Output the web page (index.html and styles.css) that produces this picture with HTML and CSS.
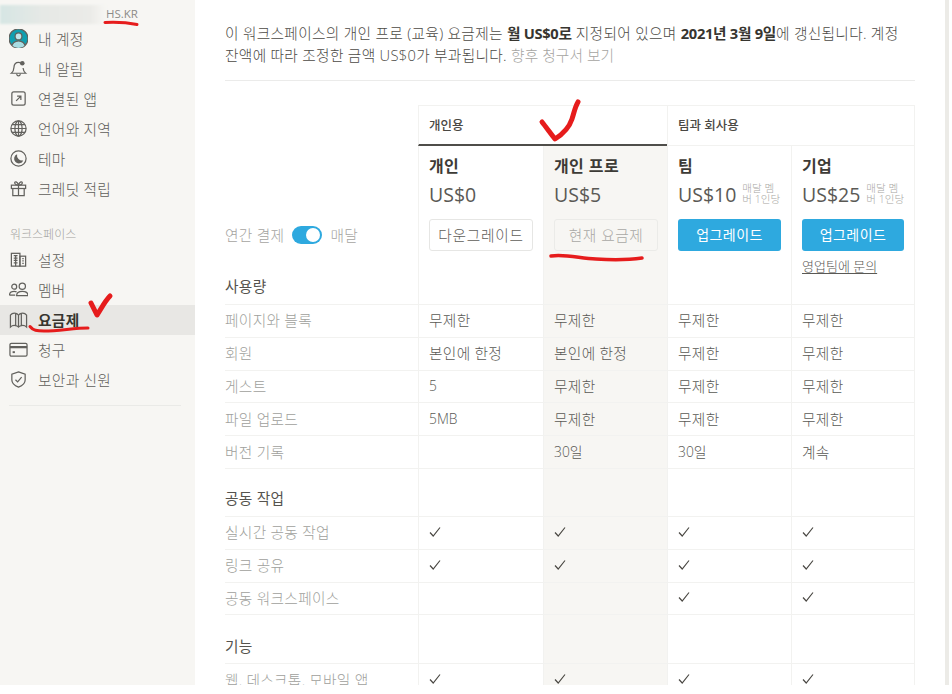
FILE: index.html
```html
<!DOCTYPE html>
<html lang="ko">
<head>
<meta charset="utf-8">
<title>요금제</title>
<link rel="stylesheet" href="styles.css">
</head>
<body>
<div class="shot">
  <aside class="sidebar">
    <div class="account"><span class="blur"></span><span class="domain">HS.KR</span></div>
    <nav class="nav">
      <a class="item"><svg class="ic" viewBox="0 0 20 20"><defs><clipPath id="av"><circle cx="10" cy="10" r="10"/></clipPath></defs><circle cx="10" cy="10" r="10" fill="#0f9fb0"/><g clip-path="url(#av)"><circle cx="10" cy="7.8" r="3.6" fill="#bfe6ea"/><ellipse cx="10" cy="18.5" rx="7" ry="6" fill="#a8dde3"/></g></svg><span>내 계정</span></a>
      <a class="item"><svg class="ic" viewBox="0 0 20 20"><path d="M12.500 4.200C11.800 3.700 11 3.500 10 3.500 7 3.500 5.300 6 5.200 9c-.1 2.800-1 4.600-2.700 6h15c-1.700-1.400-2.500-3.200-2.700-5.500"/><path d="M8 15.500c.2 1.500 1 2.300 2 2.300s1.800-.8 2-2.300"/><circle cx="14" cy="4.500" r="2.400" class="fill"/></svg><span>내 알림</span></a>
      <a class="item"><svg class="ic" viewBox="0 0 20 20"><rect x="3" y="3" width="14" height="14" rx="2"/><path d="M7.500 12.500l5-5M8.500 7.500h4v4"/></svg><span>연결된 앱</span></a>
      <a class="item"><svg class="ic" viewBox="0 0 20 20"><circle cx="10" cy="10" r="8"/><ellipse cx="10" cy="10" rx="3.800" ry="8"/><path d="M10 2v16M2 10h16M3.200 6h13.600M3.200 14h13.600"/></svg><span>언어와 지역</span></a>
      <a class="item"><svg class="ic" viewBox="0 0 20 20"><circle cx="10" cy="10" r="8"/><path class="fill" d="M8.500 5.500a5 5 0 1 0 6.500 6.500 5.500 5.500 0 0 1-6.500-6.500z"/></svg><span>테마</span></a>
      <a class="item"><svg class="ic" viewBox="0 0 20 20"><rect x="2.500" y="6.500" width="15" height="3.500"/><path d="M4 10v7.500h12V10M10 6.500v11M10 6.500C8 6.500 6 5.500 6 4s2.800-2 4 2.500c1.200-4.500 4-4 4-2.500s-2 2.500-4 2.500z"/></svg><span>크레딧 적립</span></a>
    </nav>
    <div class="section-label">워크스페이스</div>
    <nav class="nav">
      <a class="item"><svg class="ic" viewBox="0 0 20 20"><rect x="2.500" y="3.500" width="9" height="13.500"/><rect x="11.500" y="6.500" width="6" height="10.500"/><path d="M5 6h4M5 8.500h4M5 11h4M5 13.500h4M14 9h1.500M14 11.500h1.500M14 14h1.500M7 6v11"/></svg><span>설정</span></a>
      <a class="item"><svg class="ic" viewBox="0 0 20 20"><circle cx="5.500" cy="7" r="2.600"/><circle cx="14" cy="6.500" r="3.300"/><path d="M.5 16c0-2.500 2-4 5-4 1 0 1.800.2 2.500.5M8 16.500c0-3 2.500-4.500 6-4.500s6 1.500 6 4.500zM.5 16h6"/></svg><span>멤버</span></a>
      <a class="item active"><svg class="ic" viewBox="0 0 20 20"><path d="M1.500 5.500C3 3.500 5 3 7 3.500v13c-2-.5-4 0-5.500 1.500zM7 3.500c1 0 2 .5 3 2 1-1.500 2-2 3-2v13c-1 0-2 .5-3 1.500-1-1-2-1.500-3-1.500zM13 3.500c2-.5 4 0 5.500 2V18c-1.500-1.500-3.500-2-5.500-1.500zM10 5.500V18"/></svg><span>요금제</span></a>
      <a class="item"><svg class="ic" viewBox="0 0 20 20"><rect x="1" y="3.500" width="18" height="13.500" rx="1.500"/><path d="M1 7.500h18" stroke-width="2.400"/><rect x="3.800" y="11.800" width="2.400" height="2" class="fill"/></svg><span>청구</span></a>
      <a class="item"><svg class="ic" viewBox="0 0 20 20"><path d="M10 2l7 2.500v6c0 3.500-3 6-7 7.500-4-1.500-7-4-7-7.500v-6z"/><path d="M6.800 10.200l2.300 2.300 4.200-5"/></svg><span>보안과 신원</span></a>
    </nav>
    <div class="side-rule"></div>
  </aside>

  <main class="main">
    <p class="intro">이 워크스페이스의 개인 프로 (교육) 요금제는 <b>월 US$0로</b> 지정되어 있으며 <b>2021년 3월 9일</b>에 갱신됩니다. 계정 잔액에 따라 조정한 금액 US$0가 부과됩니다. <span class="muted">향후 청구서 보기</span></p>
    <div class="rule"></div>

    <section class="table">
      <div class="grid groups">
        <div class="cell blank"></div>
        <div class="group dark">개인용</div>
        <div class="group edge">팀과 회사용</div>
      </div>

      <div class="grid plans">
        <div class="cell toggle-cell">
          <div class="toggle-row"><span>연간 결제</span><span class="switch"><i></i></span><span>매달</span></div>
          <div class="section-title">사용량</div>
        </div>
        <div class="cell plan">
          <h3>개인</h3>
          <div class="price">US$0</div>
          <div class="btn ghost">다운그레이드</div>
        </div>
        <div class="cell plan cur">
          <h3>개인 프로</h3>
          <div class="price">US$5</div>
          <div class="btn current">현재 요금제</div>
        </div>
        <div class="cell plan">
          <h3>팀</h3>
          <div class="price">US$10<small>매달 멤버 1인당</small></div>
          <div class="btn blue">업그레이드</div>
        </div>
        <div class="cell plan last">
          <h3>기업</h3>
          <div class="price">US$25<small>매달 멤버 1인당</small></div>
          <div class="btn blue">업그레이드</div>
          <a class="contact">영업팀에 문의</a>
        </div>
      </div>

      <div class="grid row"><div class="cell label">페이지와 블록</div><div class="cell">무제한</div><div class="cell cur">무제한</div><div class="cell">무제한</div><div class="cell last">무제한</div></div>
      <div class="grid row"><div class="cell label">회원</div><div class="cell">본인에 한정</div><div class="cell cur">본인에 한정</div><div class="cell">무제한</div><div class="cell last">무제한</div></div>
      <div class="grid row"><div class="cell label">게스트</div><div class="cell"><span class="num">5</span></div><div class="cell cur">무제한</div><div class="cell">무제한</div><div class="cell last">무제한</div></div>
      <div class="grid row"><div class="cell label">파일 업로드</div><div class="cell"><span class="num">5MB</span></div><div class="cell cur">무제한</div><div class="cell">무제한</div><div class="cell last">무제한</div></div>
      <div class="grid row"><div class="cell label">버전 기록</div><div class="cell"></div><div class="cell cur"><span class="num">30일</span></div><div class="cell"><span class="num">30일</span></div><div class="cell last">계속</div></div>

      <div class="grid head"><div class="cell title">공동 작업</div><div class="cell"></div><div class="cell cur"></div><div class="cell"></div><div class="cell last"></div></div>
      <div class="grid row"><div class="cell label">실시간 공동 작업</div><div class="cell"><svg class="tick" viewBox="0 0 12 12"><path d="M1 6.500l3.200 3.500L11 1.500"/></svg></div><div class="cell cur"><svg class="tick" viewBox="0 0 12 12"><path d="M1 6.500l3.200 3.500L11 1.500"/></svg></div><div class="cell"><svg class="tick" viewBox="0 0 12 12"><path d="M1 6.500l3.200 3.500L11 1.500"/></svg></div><div class="cell last"><svg class="tick" viewBox="0 0 12 12"><path d="M1 6.500l3.200 3.500L11 1.500"/></svg></div></div>
      <div class="grid row"><div class="cell label">링크 공유</div><div class="cell"><svg class="tick" viewBox="0 0 12 12"><path d="M1 6.500l3.200 3.500L11 1.500"/></svg></div><div class="cell cur"><svg class="tick" viewBox="0 0 12 12"><path d="M1 6.500l3.200 3.500L11 1.500"/></svg></div><div class="cell"><svg class="tick" viewBox="0 0 12 12"><path d="M1 6.500l3.200 3.500L11 1.500"/></svg></div><div class="cell last"><svg class="tick" viewBox="0 0 12 12"><path d="M1 6.500l3.200 3.500L11 1.500"/></svg></div></div>
      <div class="grid row"><div class="cell label">공동 워크스페이스</div><div class="cell"></div><div class="cell cur"></div><div class="cell"><svg class="tick" viewBox="0 0 12 12"><path d="M1 6.500l3.200 3.500L11 1.500"/></svg></div><div class="cell last"><svg class="tick" viewBox="0 0 12 12"><path d="M1 6.500l3.200 3.500L11 1.500"/></svg></div></div>

      <div class="grid head tall"><div class="cell title">기능</div><div class="cell"></div><div class="cell cur"></div><div class="cell"></div><div class="cell last"></div></div>
      <div class="grid row"><div class="cell label">웹, 데스크톱, 모바일 앱</div><div class="cell"><svg class="tick" viewBox="0 0 12 12"><path d="M1 6.500l3.200 3.500L11 1.500"/></svg></div><div class="cell cur"><svg class="tick" viewBox="0 0 12 12"><path d="M1 6.500l3.200 3.500L11 1.500"/></svg></div><div class="cell"><svg class="tick" viewBox="0 0 12 12"><path d="M1 6.500l3.200 3.500L11 1.500"/></svg></div><div class="cell last"><svg class="tick" viewBox="0 0 12 12"><path d="M1 6.500l3.200 3.500L11 1.500"/></svg></div></div>
    </section>
  </main>

  <div class="scrollbar"></div>

  <svg class="marks" viewBox="0 0 949 685">
    <path class="m3" d="M105 22.500c10-.5 22 0 32 2"/>
    <path class="m5" d="M91 303l6 12c4-6 8-14 13-19"/>
    <path class="m3" d="M30 326.500c3 4 7 4.500 14 4.500 15 0 30-3 44-3"/>
    <path class="m5" d="M542 122c4 5 9 12 13 17 8-5 14-11 17-20 2-6 3-12 6-17"/>
    <path class="m4" d="M551 256c14-2 28 2 45 3 16 1 32 1 46-1"/>
  </svg>
</div>
</body>
</html>
```
FILE: styles.css
```css
* { box-sizing: border-box; }
html, body { margin: 0; padding: 0; background: #fff; }
body {
  font-family: "Open Sans", "Noto Sans CJK KR", sans-serif;
  font-size: 14.700px;
  color: #55534e;
}
.shot {
  position: relative;
  width: 949px;
  height: 685px;
  display: flex;
  overflow: hidden;
  background: #fff;
}

/* sidebar */
.sidebar {
  flex: 0 0 195px;
  background: #f7f6f3;
  padding-top: 5px;
}
.account { display: flex; height: 19px; align-items: center; }
.blur {
  width: 106px;
  height: 19px;
  background: linear-gradient(90deg, #d6e6e4 0%, #e6e9e6 40%, #ebebe8 85%, #f7f6f3 100%);
  filter: blur(1px);
}
.domain { font-size: 11.500px; color: #8c8b88; line-height: 16px; margin-top: -1px; }
.nav { display: flex; flex-direction: column; }
.item {
  display: flex;
  align-items: center;
  height: 30px;
  padding: 0 0 2px 9px;
  gap: 10px;
  color: #5f5e5a;
  font-weight: 300;
  letter-spacing: .3px;
}
.item.active { background: #e8e7e4; color: #37352f; font-weight: 700; }
.ic {
  width: 19px;
  height: 19px;
  flex: none;
  fill: none;
  stroke: #62615d;
  stroke-width: 1.300;
}
.ic .fill { fill: #62615d; stroke: none; }
.section-label {
  margin-top: 22px;
  height: 19px;
  padding-left: 10px;
  font-size: 12px;
  line-height: 17px;
  color: #a5a4a1;
  font-weight: 300;
}
.side-rule { height: 1px; margin: 10px 14px 0 9px; background: #eaeae7; }

/* main */
.main { flex: 1; min-width: 0; padding: 22px 0 0 30px; }
.intro {
  margin: 0;
  width: 680px;
  line-height: 22px;
  font-weight: 300;
  color: #4c4a45;
  letter-spacing: .3px;
}
.intro b { font-weight: 700; color: #37352f; letter-spacing: -.3px; }
.muted { color: #a5a4a1; letter-spacing: .1px; }
.rule { width: 690px; height: 1px; margin-top: 14px; background: #ebebea; }

/* table */
.table { margin-top: 24px; width: 690px; }
.grid {
  display: grid;
  grid-template-columns: 193px 125px 124px 124px 124px;
}
.cell {
  border-left: 1px solid #f2f2f0;
  border-bottom: 1px solid #f2f2f0;
  padding-left: 10px;
  display: flex;
  align-items: center;
  color: #5a5955;
  font-weight: 300;
  letter-spacing: .3px;
}
.cell.label, .cell.title, .cell.toggle-cell, .cell.blank { border-left: 0; padding-left: 0; }
.cell.blank { border-bottom: 0; }
.cell.last { border-right: 1px solid #f2f2f0; }
.cur { background: #f7f6f3; }
.cell.label { color: #a09f9c; }
.num { font-size: 13.800px; letter-spacing: 0; }

.groups { height: 41px; grid-template-columns: 193px 249px 248px; }
.group {
  border-top: 1px solid #f2f2f0;
  border-left: 1px solid #f2f2f0;
  border-bottom: 1px solid #f2f2f0;
  padding: 0 0 2px 10px;
  display: flex;
  align-items: center;
  font-size: 12.500px;
  font-weight: 500;
  color: #4a4843;
}
.group.dark { border-bottom: 2px solid #4f4e4a; }
.group.edge { border-right: 1px solid #f2f2f0; }

.plans { height: 159px; }
.plan {
  flex-direction: column;
  align-items: flex-start;
  padding-top: 8px;
}
.plan h3 {
  margin: 0;
  font-size: 16px;
  line-height: 24px;
  font-weight: 700;
  letter-spacing: .4px;
  color: #3d3b36;
}
.price {
  display: flex;
  align-items: center;
  height: 32px;
  font-size: 19.500px;
  font-weight: 400;
  letter-spacing: 0;
  color: #5a5955;
}
.price small {
  width: 39px;
  margin-left: 6px;
  font-size: 10.500px;
  line-height: 11px;
  color: #a8a7a4;
  font-weight: 300;
}
.btn {
  width: 104px;
  height: 32px;
  margin-top: 9px;
  padding-bottom: 2px;
  border-radius: 3px;
  display: flex;
  align-items: center;
  justify-content: center;
  font-weight: 300;
}
.ghost { border: 1px solid #e6e6e4; background: #fff; color: #5f5e5a; letter-spacing: .7px; }
.current { border: 1px solid #ebebe8; color: #a9a8a5; letter-spacing: .5px; }
.blue { width: 103px; background: #2ea9df; color: #fff; font-weight: 400; font-size: 14px; letter-spacing: .4px; }
.plan.last .blue { width: 102px; }
.contact {
  margin-top: 7px;
  font-size: 13px;
  line-height: 17px;
  letter-spacing: 0;
  color: #5a5955;
  text-decoration: underline;
  text-underline-offset: 2px;
}
.toggle-cell {
  flex-direction: column;
  align-items: flex-start;
  justify-content: flex-end;
  padding-bottom: 8px;
}
.toggle-row {
  display: flex;
  align-items: center;
  gap: 8px;
  color: #a5a4a1;
  margin-bottom: 30px;
}
.switch {
  width: 30px;
  height: 18px;
  border-radius: 9px;
  background: #2ea9df;
  padding: 2px 2px 2px 14px;
  display: block;
}
.switch i { display: block; width: 14px; height: 14px; border-radius: 50%; background: #fff; }
.section-title, .cell.title { color: #55534e; font-weight: 400; }

.row { height: 32.800px; }
.row .cell { padding-bottom: 2px; }
.row .tick { width: 12px; height: 12px; fill: none; stroke: #4a4843; stroke-width: 1.200; }
.head { height: 48px; }
.head.tall { height: 49px; }
.head .cell { align-items: flex-end; padding-bottom: 8px; }
.head.tall .cell { padding-bottom: 7px; }

.scrollbar { width: 4px; flex: none; background: #ecebe7; }

/* hand-drawn annotations lying over the page */
.marks { position: absolute; left: 0; top: 0; width: 949px; height: 685px; pointer-events: none; }
.marks path { fill: none; stroke: #e61c1c; stroke-linecap: round; stroke-linejoin: round; }
.m3 { stroke-width: 3px; }
.m4 { stroke-width: 3.500px; }
.m5 { stroke-width: 5px; }
```
